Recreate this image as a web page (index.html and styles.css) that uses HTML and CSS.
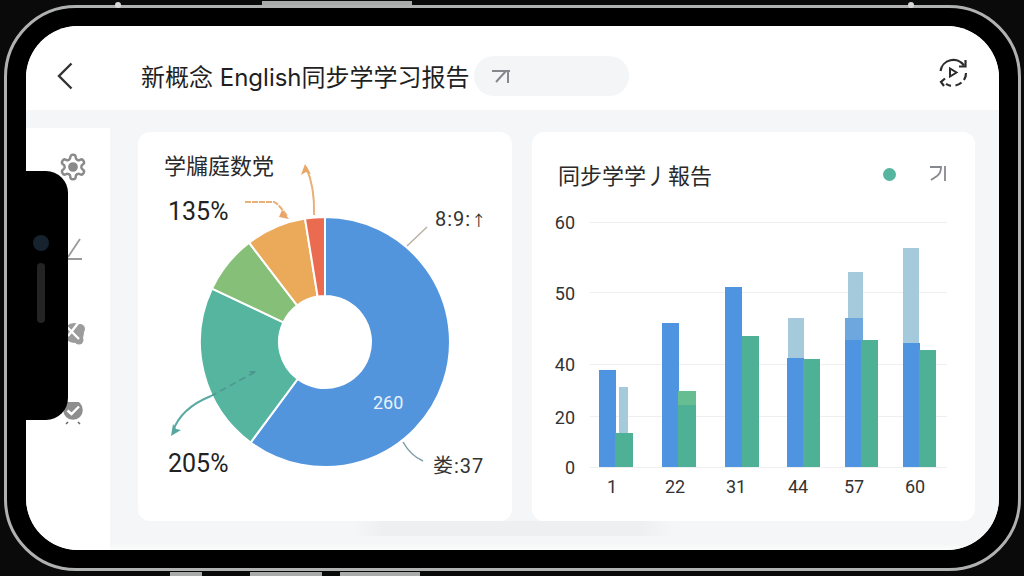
FILE: index.html
```html
<!DOCTYPE html>
<html lang="zh-CN">
<head>
    <meta charset="UTF-8">
    <meta name="viewport" content="width=device-width, initial-scale=1.0">
    <title>新概念 English同步学学习报告</title>
    <link rel="stylesheet" href="styles.css">
</head>
<body>
    <!-- hardware buttons and frame glints -->
    <div class="hw hw-top"></div>
    <div class="hw hw-bottom-a"></div>
    <div class="hw hw-bottom-b"></div>
    <div class="hw hw-bottom-c"></div>
    <div class="glint glint-left"></div>
    <div class="glint glint-right"></div>

    <div class="phone">
        <div class="screen">
            <div class="notch">
                <div class="camera"></div>
                <div class="speaker"></div>
            </div>

            <header class="top-bar">
                <svg class="back-icon" viewBox="0 0 24 32" fill="none" stroke="#333" stroke-width="2.4">
                    <path d="M17.500 3.500 5 16l12.500 12.500"/>
                </svg>
                <h1 class="page-title">新概念 English同步学学习报告</h1>
                <div class="search-pill">
                    <svg class="corner-icon" viewBox="0 0 20 16" fill="none" stroke="#85898d" stroke-width="2">
                        <path d="M1 3h18M17 2v13M15 3 5 14"/>
                    </svg>
                </div>
                <svg class="replay-icon" viewBox="0 0 32 32" fill="none" stroke="#2c2c2c" stroke-width="2.2">
                    <path d="M3.500 14A13 13 0 0 1 27 8.500"/>
                    <path d="M28.500 3v6.500h-6.500"/>
                    <path d="M29 16a13 13 0 0 1-2 7M24.500 25.500a13 13 0 0 1-6 3M14 28.800a13 13 0 0 1-5-2"/>
                    <path d="M8 21.500l-4 3.500 3 4"/>
                    <path d="M13 11.500v8l6.500-4z" stroke-width="2"/>
                </svg>
            </header>

            <div class="content">
                <aside class="sidebar">
                    <svg class="side-icon" viewBox="0.500 0.500 23 23" fill="none" stroke="#8a8a8a" stroke-width="2">
                        <path d="M12.220 2h-.44a2 2 0 0 0-2 2v.18a2 2 0 0 1-1 1.730l-.43.25a2 2 0 0 1-2 0l-.15-.08a2 2 0 0 0-2.730.73l-.22.38a2 2 0 0 0 .73 2.730l.15.1a2 2 0 0 1 1 1.720v.51a2 2 0 0 1-1 1.740l-.15.09a2 2 0 0 0-.73 2.730l.22.38a2 2 0 0 0 2.730.73l.15-.08a2 2 0 0 1 2 0l.43.25a2 2 0 0 1 1 1.730V20a2 2 0 0 0 2 2h.44a2 2 0 0 0 2-2v-.18a2 2 0 0 1 1-1.730l.43-.25a2 2 0 0 1 2 0l.15.08a2 2 0 0 0 2.730-.73l.22-.39a2 2 0 0 0-.73-2.730l-.15-.08a2 2 0 0 1-1-1.740v-.5a2 2 0 0 1 1-1.740l.15-.09a2 2 0 0 0 .73-2.730l-.22-.38a2 2 0 0 0-2.730-.73l-.15.08a2 2 0 0 1-2 0l-.43-.25a2 2 0 0 1-1-1.730V4a2 2 0 0 0-2-2z"/>
                        <circle cx="12" cy="12" r="3" fill="#8a8a8a"/>
                    </svg>
                    <svg class="side-icon" viewBox="0 0 28 28" fill="none" stroke="#9a9a9a" stroke-width="1.800">
                        <path d="M21 3 9 21M8 23h15"/>
                    </svg>
                    <svg class="side-icon" viewBox="0 0 28 28">
                        <circle cx="15" cy="14" r="10" fill="#9c9c9c"/>
                        <circle cx="21" cy="10" r="5" fill="#9c9c9c"/>
                        <circle cx="20" cy="21" r="4.500" fill="#9c9c9c"/>
                        <path d="M8 8 20 20M20 3 9 17" stroke="#fff" stroke-width="2.400"/>
                    </svg>
                    <svg class="side-icon" viewBox="0 0 28 28">
                        <circle cx="14" cy="8" r="9.800" fill="#8e8e8e"/>
                        <path d="M8.500 8.500 12.500 12 20 4.500" fill="none" stroke="#fff" stroke-width="2.400"/>
                        <path d="M7 22l2-2M21 22l-2-2" stroke="#666" stroke-width="1.500"/>
                    </svg>
                </aside>

                <main class="main">
                    <section class="card card-pie">
                        <h2 class="card-title pie-title">学牖庭数党</h2>
                        <svg class="chart" viewBox="138 185 374 336">
                            <g stroke="#fff" stroke-width="2">
                                <path fill="#5295dd" d="M325 217A125 125 0 1 1 250.650 442.500L297.640 378.980A46 46 0 1 0 325 296Z"/>
                                <path fill="#55b59f" d="M250.650 442.500A125 125 0 0 1 212 288.600L283.400 322.340A46 46 0 0 0 297.640 378.980Z"/>
                                <path fill="#85bf78" d="M212 288.600A125 125 0 0 1 249.100 242.700L297.060 305.460A46 46 0 0 0 283.400 322.340Z"/>
                                <path fill="#eba95a" d="M249.100 242.700A125 125 0 0 1 305 218.600L317.640 296.590A46 46 0 0 0 297.060 305.460Z"/>
                                <path fill="#ea6b50" d="M305 218.600A125 125 0 0 1 325 217V296A46 46 0 0 0 317.640 296.590Z"/>
                            </g>

                            <g fill="none" stroke-width="1.500">
                                <path stroke="#e9b078" stroke-width="2" stroke-dasharray="6 1" d="M245 202h29q4 1 13 14"/>
                                <path stroke="#e9b078" stroke-width="2" d="M314 215q1-28-8-48"/>
                                <path stroke="#b9b1a4" d="M407 246l20-19"/>
                                <path stroke="#4f958f" stroke-dasharray="7 4" d="M255 372 211 396"/>
                                <path stroke="#5aa9a3" stroke-width="2" d="M211 396q-30 12-38 35"/>
                                <path stroke="#7c9da5" d="M403 442q8 14 20 19"/>
                            </g>
                            <path fill="#e9a666" d="M282 210l7 9-10-2z"/>
                            <path fill="#e9a666" d="M305 164l6 10-5-2-5 3z"/>
                            <path fill="#4f958f" d="M256 371l-7 0 3 4z"/>
                            <path fill="#55a8a0" d="M171 436l2-12 3 5 5 1z"/>

                            <text class="pie-label" x="168" y="220">135%</text>
                            <text class="pie-label" x="168" y="472">205%</text>
                            <text class="side-label" x="435" y="226">8:9:<tspan class="side-arrow">↑</tspan></text>
                            <text class="side-label" x="433" y="473">娄:37</text>
                            <text class="slice-label" x="373" y="409">260</text>
                        </svg>
                    </section>

                    <section class="card card-bars">
                        <div class="bars-head">
                            <h2 class="card-title">同步学学丿報告</h2>
                            <span class="legend-dot"></span>
                            <svg class="legend-icon" viewBox="0 0 20 18" fill="none" stroke="#85898d" stroke-width="1.800">
                                <path d="M3 2h11q0 6-4 9l-6 4M18 1v15"/>
                            </svg>
                        </div>
                        <svg class="chart" viewBox="532 200 443 321">
                            <g stroke="#eeeff1" stroke-width="1">
                                <path d="M590 222.500H947M590 292.500H947M590 364.500H947M590 416.500H947M590 467.500H947"/>
                            </g>
                            <g class="axis-y" text-anchor="end">
                                <text x="575" y="229">60</text>
                                <text x="575" y="300">50</text>
                                <text x="575" y="371">40</text>
                                <text x="575" y="424">20</text>
                                <text x="575" y="474">0</text>
                            </g>

                            <g fill="#a4cadb">
                                <rect x="619" y="387" width="9" height="50"/>
                                <rect x="788" y="318" width="16" height="42"/>
                                <rect x="848" y="272" width="15" height="50"/>
                                <rect x="903" y="248" width="16" height="97"/>
                            </g>
                            <rect x="845" y="318" width="18" height="24" fill="#6ea6de"/>
                            <g fill="#4f94e0">
                                <rect x="599" y="370" width="17" height="97"/>
                                <rect x="662" y="323" width="17" height="144"/>
                                <rect x="725" y="287" width="17" height="180"/>
                                <rect x="787" y="358" width="17" height="109"/>
                                <rect x="845" y="340" width="17" height="127"/>
                                <rect x="903" y="343" width="17" height="124"/>
                            </g>
                            <rect x="678" y="391" width="18" height="15" fill="#67bd92"/>
                            <g fill="#4eb196">
                                <rect x="615" y="433" width="18" height="34"/>
                                <rect x="678" y="405" width="18" height="62"/>
                                <rect x="742" y="336" width="17" height="131"/>
                                <rect x="803" y="359" width="17" height="108"/>
                                <rect x="861" y="340" width="17" height="127"/>
                                <rect x="919" y="350" width="17" height="117"/>
                            </g>

                            <g class="axis-x" text-anchor="middle">
                                <text x="612" y="493">1</text>
                                <text x="675" y="493">22</text>
                                <text x="736" y="493">31</text>
                                <text x="798" y="493">44</text>
                                <text x="854" y="493">57</text>
                                <text x="915" y="493">60</text>
                            </g>
                        </svg>
                    </section>
                    <div class="bottom-shade"></div>
                </main>
            </div>
        </div>
    </div>
</body>
</html>
```

FILE: styles.css
```css
* {
    margin: 0;
    padding: 0;
    box-sizing: border-box;
}

body {
    width: 1024px;
    height: 576px;
    overflow: hidden;
    background: #0a0a0a;
    font-family: Roboto, "Noto Sans CJK SC", sans-serif;
    color: #222;
    position: relative;
}

/* Device frame */
.phone {
    width: 1017px;
    height: 566px;
    margin: 5px 0 0 4px;
    padding: 18px 19px;
    background: #000;
    border: 3px solid #b0b1b1;
    border-radius: 72px;
}

.hw {
    position: absolute;
    background: #a9abab;
}

.hw-top {
    left: 262px;
    top: 1px;
    width: 150px;
    height: 4px;
}

.hw-bottom-a {
    left: 170px;
    top: 572px;
    width: 32px;
    height: 4px;
}

.hw-bottom-b {
    left: 250px;
    top: 572px;
    width: 72px;
    height: 4px;
}

.hw-bottom-c {
    left: 340px;
    top: 572px;
    width: 80px;
    height: 4px;
}

.glint {
    position: absolute;
    top: 2px;
    width: 6px;
    height: 6px;
    border-radius: 50%;
    background: #d8d8d8;
    z-index: 2;
}

.glint-left {
    left: 115px;
}

.glint-right {
    left: 908px;
}

.screen {
    position: relative;
    width: 973px;
    height: 524px;
    background: #f5f6f8;
    border-radius: 52px;
    overflow: hidden;
    display: flex;
    flex-direction: column;
}

.notch {
    position: absolute;
    left: 0;
    top: 145px;
    width: 42px;
    height: 249px;
    background: #000;
    border-radius: 0 22px 22px 0;
    z-index: 3;
    display: flex;
    flex-direction: column;
    align-items: center;
    padding: 64px 12px 0 0;
}

.camera {
    width: 16px;
    height: 16px;
    flex-shrink: 0;
    border-radius: 50%;
    background: #16222e;
}

.speaker {
    width: 8px;
    height: 60px;
    flex-shrink: 0;
    margin-top: 12px;
    border-radius: 4px;
    background: #242424;
}

/* Top bar */
.top-bar {
    height: 84px;
    flex-shrink: 0;
    background: #fff;
    display: flex;
    align-items: center;
    padding: 15px 30px 0 28px;
}

.back-icon {
    width: 24px;
    height: 32px;
}

.page-title {
    margin-left: 63px;
    font-family: Inter, "Noto Sans CJK SC", sans-serif;
    font-size: 24px;
    font-weight: 400;
    white-space: nowrap;
    color: #1f1f1f;
}

.search-pill {
    width: 155px;
    height: 40px;
    margin-left: 4px;
    padding-left: 17px;
    border-radius: 20px;
    background: #f4f5f7;
    display: flex;
    align-items: center;
}

.corner-icon {
    width: 20px;
    height: 16px;
}

.replay-icon {
    width: 32px;
    height: 32px;
    margin-left: auto;
    margin-bottom: 6px;
}

/* Body */
.content {
    flex: 1;
    display: flex;
    min-height: 0;
}

.sidebar {
    width: 84px;
    margin-top: 18px;
    padding: 25px 0 0 33px;
    background: #fff;
    display: flex;
    flex-direction: column;
    gap: 55px;
}

.side-icon {
    width: 28px;
    height: 28px;
}

.main {
    position: relative;
    flex: 1;
    display: flex;
    gap: 20px;
    padding: 22px 24px 29px 28px;
    background: linear-gradient(#f5f6f8 calc(100% - 6px), #fcfcfc);
}

.card {
    position: relative;
    background: #fff;
    border-radius: 12px;
    display: flex;
    flex-direction: column;
    z-index: 1;
}

.card-pie {
    width: 374px;
}

.card-bars {
    width: 443px;
}

.card-title {
    font-size: 22px;
    font-weight: 400;
    color: #2a2a2a;
    white-space: nowrap;
}

.pie-title {
    height: 53px;
    padding: 19px 0 0 26px;
    line-height: 32px;
}

.bars-head {
    height: 68px;
    padding: 16px 28px 0 26px;
    display: flex;
    align-items: center;
}

.legend-dot {
    width: 13px;
    height: 13px;
    margin-left: auto;
    margin-right: 31px;
    border-radius: 50%;
    background: #55b59f;
}

.legend-icon {
    width: 20px;
    height: 18px;
}

.chart {
    flex: 1;
    display: block;
    overflow: visible;
    min-height: 0;
}

.pie-label {
    font-size: 25px;
    fill: #222;
}

.side-label {
    font-size: 20px;
    letter-spacing: 1px;
    fill: #333;
}

.side-arrow {
    font-size: 15px;
}

.slice-label {
    font-size: 18px;
    fill: #e8f1fb;
}

.axis-y text {
    font-size: 18px;
    fill: #333;
}

.axis-x text {
    font-size: 18px;
    fill: #333;
}

.bottom-shade {
    position: absolute;
    left: 243px;
    bottom: 14px;
    width: 320px;
    height: 15px;
    background: linear-gradient(90deg, transparent, #eeeff1 10%, #eeeff1 90%, transparent);
}
```
